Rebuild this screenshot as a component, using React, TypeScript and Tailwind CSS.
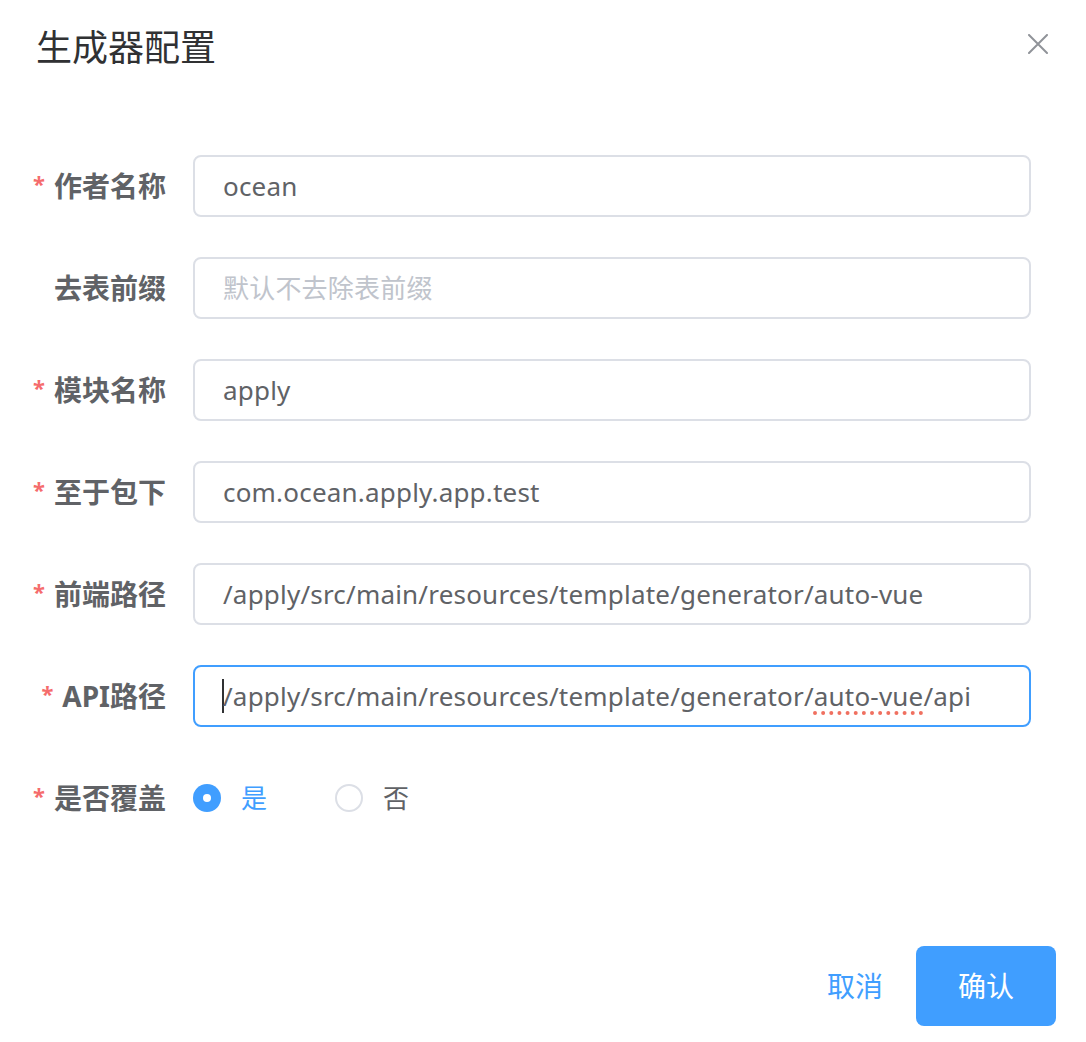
import React from "react";

const FONT = '"Noto Sans", "Noto Sans CJK SC", sans-serif';

function Row({ label, required, children }: { label: string; required?: boolean; children: React.ReactNode }) {
  return (
    <div className="flex items-center h-[62px] mb-[40px]">
      <div className="w-[193px] shrink-0 pr-[27px] flex justify-end items-center text-[28px] font-bold text-[#606266] whitespace-nowrap">
        {required && <span className="text-[#f56c6c] mr-[9px] text-[22px] font-bold leading-none -mt-[6px]">*</span>}
        <span>{label}</span>
      </div>
      <div className="flex-1 mr-[55px]">{children}</div>
    </div>
  );
}

function Field({ value, placeholder, focused, children }: { value?: string; placeholder?: string; focused?: boolean; children?: React.ReactNode }) {
  return (
    <div
      className={`h-[62px] rounded-[8px] border-2 ${focused ? "border-[#409eff]" : "border-[#dcdfe6]"} flex items-center pl-[28px] text-[26px] whitespace-nowrap overflow-hidden tracking-[0.2px]`}
    >
      {children ? children : value ? <span className="text-[#606266]">{value}</span> : <span className="text-[#c0c4cc]">{placeholder}</span>}
    </div>
  );
}

export default function App() {
  return (
    <div className="w-[1086px] h-[1042px] bg-white relative" style={{ fontFamily: FONT }}>
      <div className="flex items-center justify-between pl-[36px] pr-[38px] pt-[24px]">
        <div className="text-[36px] leading-[48px] text-[#303133]">生成器配置</div>
        <svg width="20" height="20" viewBox="0 0 20 20" className="mt-[-8px]">
          <path d="M1 1 L19 19 M19 1 L1 19" stroke="#909399" strokeWidth="2" strokeLinecap="round" />
        </svg>
      </div>
      <div className="pt-[83px]">
        <Row label="作者名称" required>
          <Field value="ocean" />
        </Row>
        <Row label="去表前缀">
          <Field placeholder="默认不去除表前缀" />
        </Row>
        <Row label="模块名称" required>
          <Field value="apply" />
        </Row>
        <Row label="至于包下" required>
          <Field value="com.ocean.apply.app.test" />
        </Row>
        <Row label="前端路径" required>
          <Field value="/apply/src/main/resources/template/generator/auto-vue" />
        </Row>
        <Row label="API路径" required>
          <Field focused>
            <span className="w-[2px] h-[34px] bg-[#303133] -ml-[1px] mr-[-1px]" />
            <span className="text-[#606266]">
              /apply/src/main/resources/template/generator/
              <span className="underline decoration-dotted decoration-[#f07060] decoration-[4px] underline-offset-[6px]">auto-vue</span>
              /api
            </span>
          </Field>
        </Row>
        <Row label="是否覆盖" required>
          <div className="flex items-center">
            <div className="w-[28px] h-[28px] rounded-full bg-[#409eff] flex items-center justify-center">
              <div className="w-[8px] h-[8px] rounded-full bg-white" />
            </div>
            <span className="ml-[20px] text-[26px] text-[#409eff]">是</span>
            <div className="ml-[68px] w-[28px] h-[28px] rounded-full border-2 border-[#dcdfe6]" />
            <span className="ml-[20px] text-[26px] text-[#606266]">否</span>
          </div>
        </Row>
      </div>
      <div className="absolute left-0 right-0 top-[946px] flex justify-end items-center pr-[30px]">
        <span className="text-[28px] text-[#409eff] mr-[33px]">取消</span>
        <div className="w-[140px] h-[80px] rounded-[8px] bg-[#409eff] flex items-center justify-center text-[28px] text-white">确认</div>
      </div>
    </div>
  );
}
